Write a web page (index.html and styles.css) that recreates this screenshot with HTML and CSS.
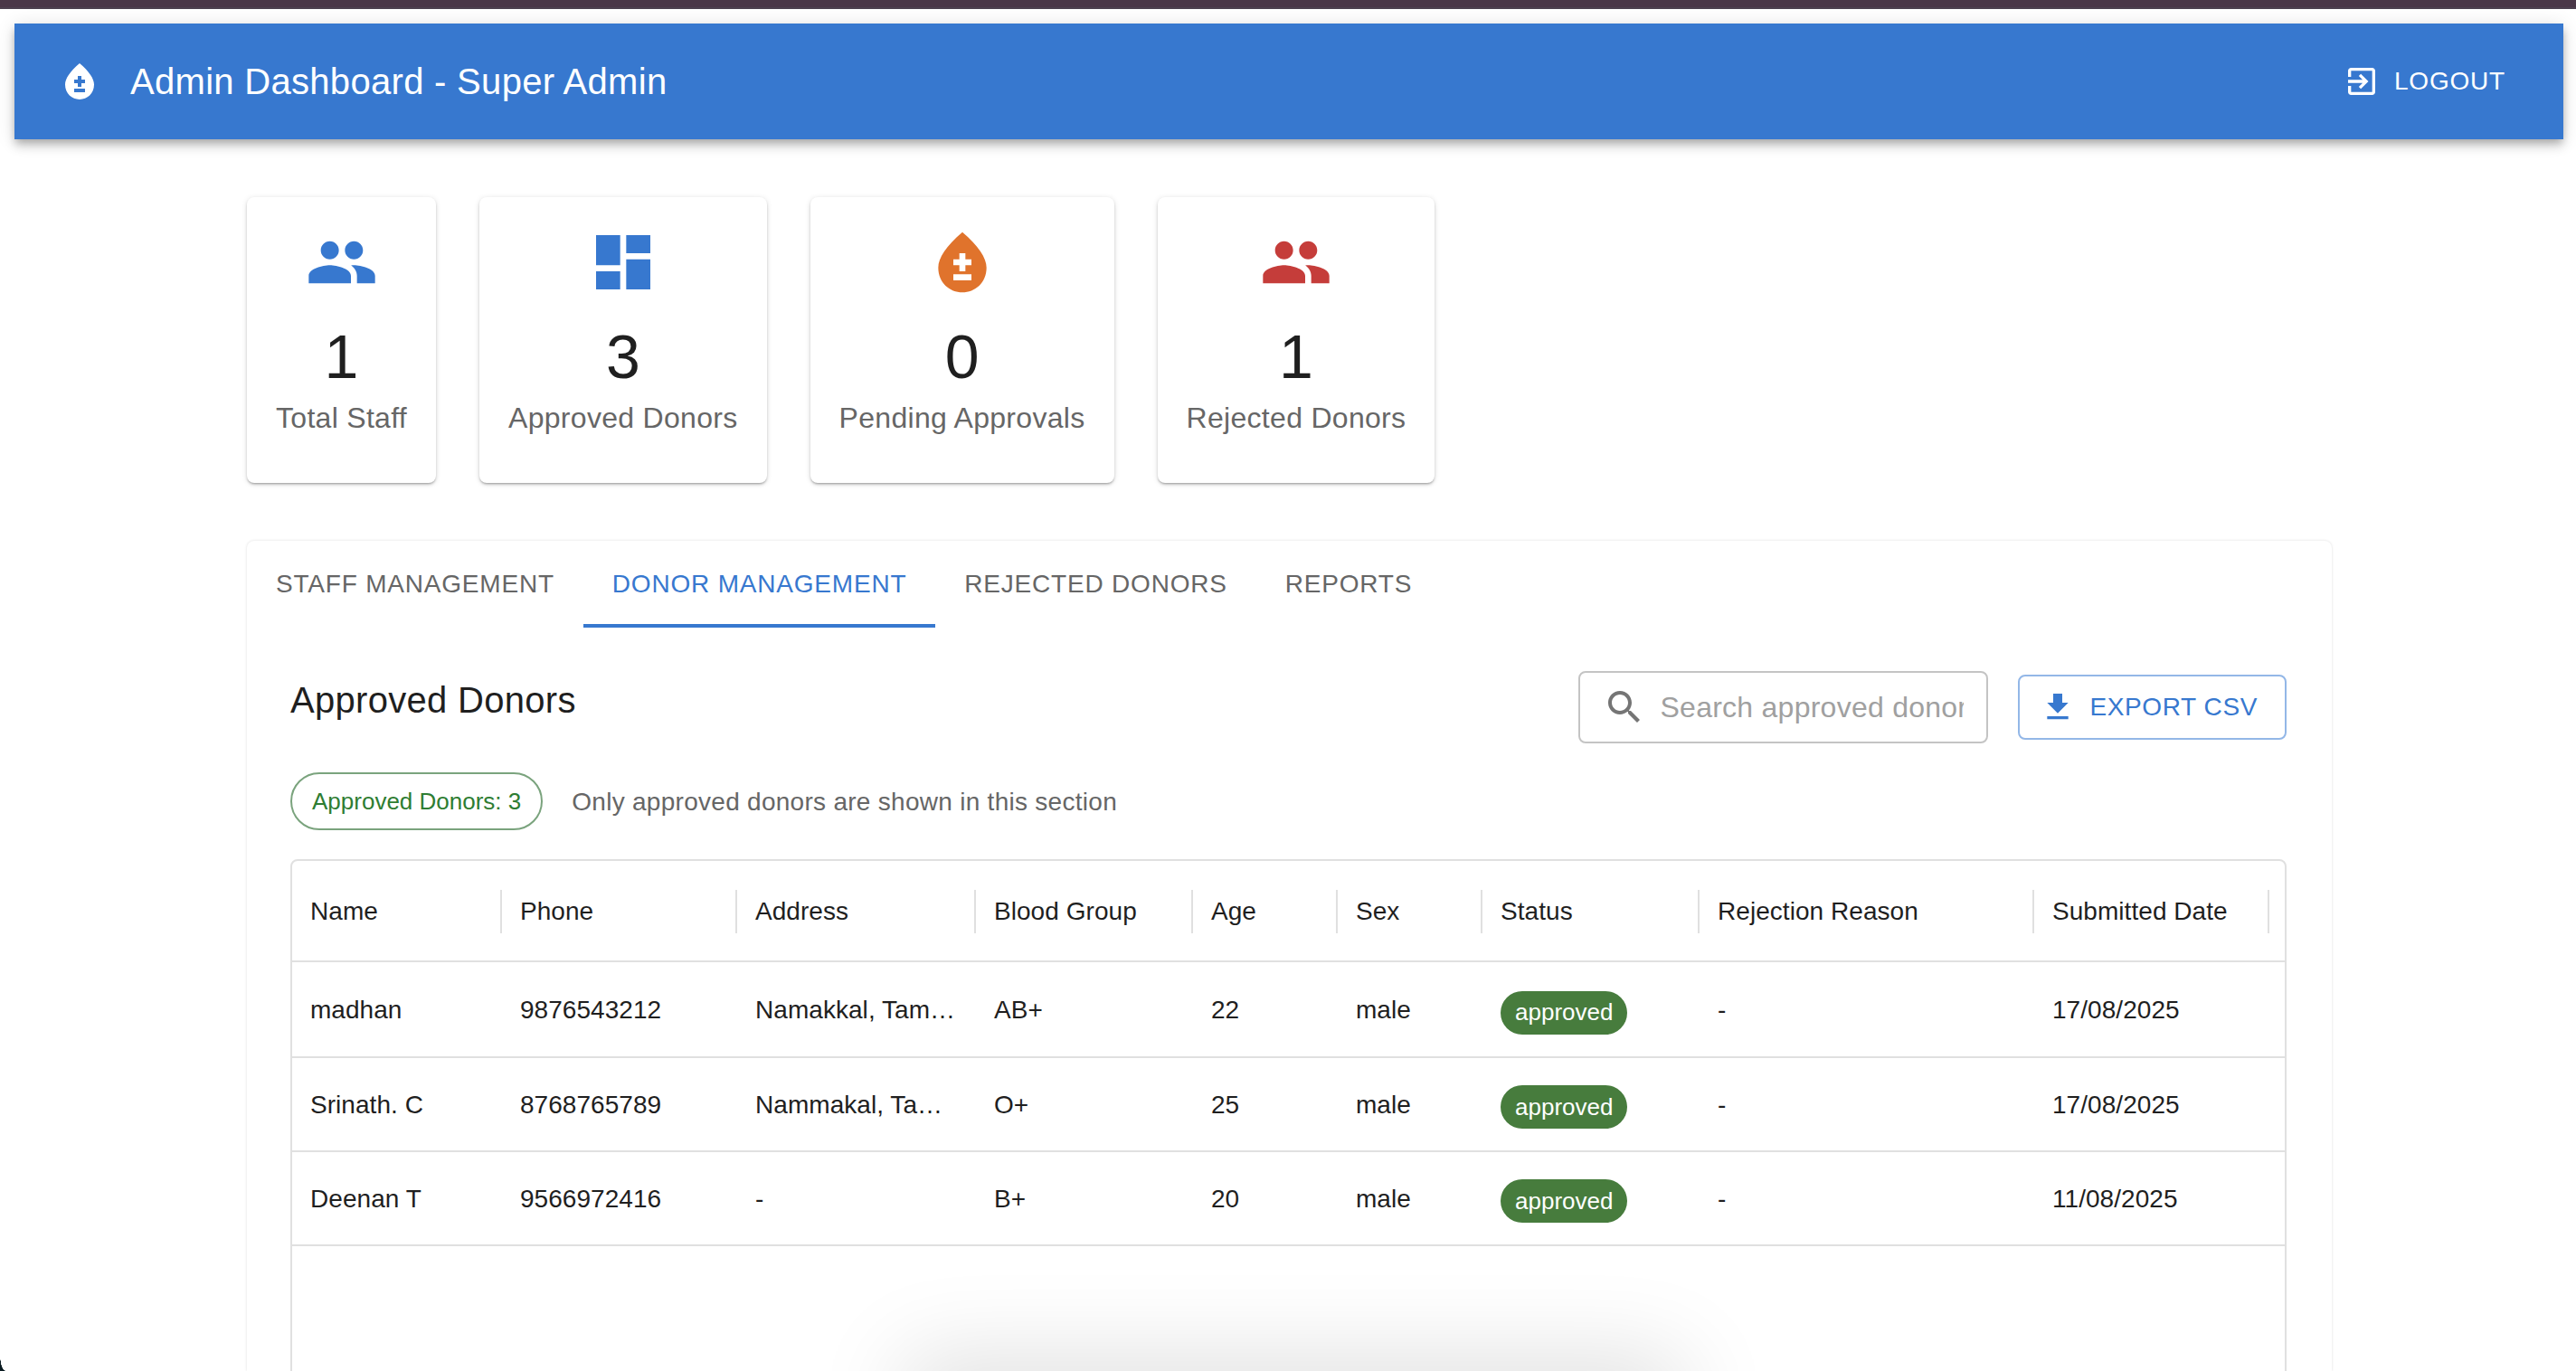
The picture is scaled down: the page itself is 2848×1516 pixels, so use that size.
FILE: index.html
```html
<!DOCTYPE html>
<html lang="en">
<head>
    <meta charset="UTF-8">
    <title>Admin Dashboard - Super Admin</title>
    <link rel="stylesheet" href="styles.css">
</head>
<body>
    <div class="topbar"></div>

    <header class="appbar">
        <svg class="appbar-icon" viewBox="0 0 24 24"><path d="M12 2c-5.33 4.55-8 8.48-8 11.8c0 4.98 3.8 8.2 8 8.2s8-3.22 8-8.2C20 10.48 17.33 6.55 12 2zM15 18H9v-2h6V18zM15 13h-2v2h-2v-2H9v-2h2V9h2v2h2V13z"/></svg>
        <h1 class="appbar-title">Admin Dashboard - Super Admin</h1>
        <button class="logout-btn">
            <svg class="logout-icon" viewBox="0 0 24 24"><path d="M10.09 15.59 11.5 17l5-5-5-5-1.41 1.41L12.67 11H3v2h9.67l-2.58 2.59zM19 3H5c-1.11 0-2 .9-2 2v4h2V5h14v14H5v-4H3v4c0 1.1.89 2 2 2h14c1.1 0 2-.9 2-2V5c0-1.1-.9-2-2-2z"/></svg>
            LOGOUT
        </button>
    </header>

    <main class="container">
        <section class="stats">
            <div class="stat-card">
                <svg class="stat-icon blue" viewBox="0 0 24 24"><path d="M16 11c1.66 0 2.99-1.34 2.99-3S17.66 5 16 5c-1.66 0-3 1.34-3 3s1.34 3 3 3zm-8 0c1.66 0 2.99-1.34 2.99-3S9.66 5 8 5C6.34 5 5 6.34 5 8s1.34 3 3 3zm0 2c-2.33 0-7 1.17-7 3.5V19h14v-2.5c0-2.33-4.67-3.5-7-3.5zm8 0c-.29 0-.62.02-.97.05 1.16.84 1.97 1.97 1.97 3.45V19h6v-2.5c0-2.33-4.67-3.5-7-3.5z"/></svg>
                <div class="stat-num">1</div>
                <div class="stat-label">Total Staff</div>
            </div>
            <div class="stat-card">
                <svg class="stat-icon blue" viewBox="0 0 24 24"><path d="M3 13h8V3H3v10zm0 8h8v-6H3v6zm10 0h8V11h-8v10zm0-18v6h8V3h-8z"/></svg>
                <div class="stat-num">3</div>
                <div class="stat-label">Approved Donors</div>
            </div>
            <div class="stat-card">
                <svg class="stat-icon orange" viewBox="0 0 24 24"><path d="M12 2c-5.33 4.55-8 8.48-8 11.8c0 4.98 3.8 8.2 8 8.2s8-3.22 8-8.2C20 10.48 17.33 6.55 12 2zM15 18H9v-2h6V18zM15 13h-2v2h-2v-2H9v-2h2V9h2v2h2V13z"/></svg>
                <div class="stat-num">0</div>
                <div class="stat-label">Pending Approvals</div>
            </div>
            <div class="stat-card">
                <svg class="stat-icon red" viewBox="0 0 24 24"><path d="M16 11c1.66 0 2.99-1.34 2.99-3S17.66 5 16 5c-1.66 0-3 1.34-3 3s1.34 3 3 3zm-8 0c1.66 0 2.99-1.34 2.99-3S9.66 5 8 5C6.34 5 5 6.34 5 8s1.34 3 3 3zm0 2c-2.33 0-7 1.17-7 3.5V19h14v-2.5c0-2.33-4.67-3.5-7-3.5zm8 0c-.29 0-.62.02-.97.05 1.16.84 1.97 1.97 1.97 3.45V19h6v-2.5c0-2.33-4.67-3.5-7-3.5z"/></svg>
                <div class="stat-num">1</div>
                <div class="stat-label">Rejected Donors</div>
            </div>
        </section>

        <section class="panel">
            <nav class="tabs">
                <div class="tab">STAFF MANAGEMENT</div>
                <div class="tab active">DONOR MANAGEMENT</div>
                <div class="tab">REJECTED DONORS</div>
                <div class="tab">REPORTS</div>
            </nav>

            <div class="panel-body">
                <div class="toolbar">
                    <h2 class="section-title">Approved Donors</h2>
                    <div class="toolbar-actions">
                        <label class="search">
                            <svg class="search-icon" viewBox="0 0 24 24"><path d="M15.5 14h-.79l-.28-.27C15.41 12.59 16 11.11 16 9.5 16 5.91 13.09 3 9.5 3S3 5.91 3 9.5 5.91 16 9.5 16c1.61 0 3.09-.59 4.23-1.57l.27.28v.79l5 4.99L20.49 19l-4.99-5zm-6 0C7.01 14 5 11.99 5 9.5S7.01 5 9.5 5 14 7.01 14 9.5 11.99 14 9.5 14z"/></svg>
                            <input class="search-input" type="text" placeholder="Search approved donors...">
                        </label>
                        <button class="export-btn">
                            <svg class="export-icon" viewBox="0 0 24 24"><path d="M19 9h-4V3H9v6H5l7 7 7-7zM5 18v2h14v-2H5z"/></svg>
                            EXPORT CSV
                        </button>
                    </div>
                </div>

                <div class="summary">
                    <span class="count-chip">Approved Donors: 3</span>
                    <span class="summary-note">Only approved donors are shown in this section</span>
                </div>

                <div class="grid">
                    <div class="row head">
                        <div class="cell">Name</div>
                        <div class="cell">Phone</div>
                        <div class="cell">Address</div>
                        <div class="cell">Blood Group</div>
                        <div class="cell">Age</div>
                        <div class="cell">Sex</div>
                        <div class="cell">Status</div>
                        <div class="cell">Rejection Reason</div>
                        <div class="cell">Submitted Date</div>
                    </div>
                    <div class="row first">
                        <div class="cell">madhan</div>
                        <div class="cell">9876543212</div>
                        <div class="cell">Namakkal, Tam…</div>
                        <div class="cell">AB+</div>
                        <div class="cell">22</div>
                        <div class="cell">male</div>
                        <div class="cell"><span class="status">approved</span></div>
                        <div class="cell">-</div>
                        <div class="cell">17/08/2025</div>
                    </div>
                    <div class="row">
                        <div class="cell">Srinath. C</div>
                        <div class="cell">8768765789</div>
                        <div class="cell">Nammakal, Ta…</div>
                        <div class="cell">O+</div>
                        <div class="cell">25</div>
                        <div class="cell">male</div>
                        <div class="cell"><span class="status">approved</span></div>
                        <div class="cell">-</div>
                        <div class="cell">17/08/2025</div>
                    </div>
                    <div class="row">
                        <div class="cell">Deenan T</div>
                        <div class="cell">9566972416</div>
                        <div class="cell">-</div>
                        <div class="cell">B+</div>
                        <div class="cell">20</div>
                        <div class="cell">male</div>
                        <div class="cell"><span class="status">approved</span></div>
                        <div class="cell">-</div>
                        <div class="cell">11/08/2025</div>
                    </div>
                </div>
            </div>
        </section>
    </main>

    <div class="dock-shadow"></div>
    <div class="window-corner"></div>
</body>
</html>
```

FILE: styles.css
```css
* {
    box-sizing: border-box;
}

html, body {
    height: 1516px;
    margin: 0;
    overflow: hidden;
}

body {
    position: relative;
    background: #fff;
    font-family: "Liberation Sans", Arial, sans-serif;
    color: #1f1f1f;
}

button {
    font-family: inherit;
    background: none;
    cursor: pointer;
}

svg {
    display: block;
    fill: currentColor;
    flex-shrink: 0;
}

.topbar {
    height: 10px;
    background: #4a3748;
    border-bottom: 2px solid #4d4150;
}

.appbar {
    display: flex;
    align-items: center;
    height: 128px;
    margin: 16px 14px 0 16px;
    padding: 0 48px;
    background: #3778cf;
    color: #fff;
    box-shadow: 0 4px 8px -2px rgba(0,0,0,.2), 0 8px 10px 0 rgba(0,0,0,.14), 0 2px 20px 0 rgba(0,0,0,.12);
}

.appbar-icon {
    width: 48px;
    height: 48px;
    margin-right: 32px;
}

.appbar-title {
    flex: 1;
    margin: 0;
    font-size: 40px;
    font-weight: 400;
    letter-spacing: .3px;
}

.logout-btn {
    display: flex;
    align-items: center;
    padding: 12px 16px;
    border: 0;
    color: #fff;
    font-size: 28px;
    letter-spacing: .8px;
}

.logout-icon {
    width: 40px;
    height: 40px;
    margin: 0 16px 0 -8px;
}

.container {
    width: 2305px;
    margin: 64px 0 0 273px;
}

.stats {
    display: flex;
    gap: 48px;
}

.stat-card {
    display: flex;
    flex-direction: column;
    align-items: center;
    padding: 32px 32px 48px;
    height: 316px;
    background: #fff;
    border-radius: 8px;
    box-shadow: 0 2px 2px -1px rgba(0,0,0,.2), 0 2px 3px 0 rgba(0,0,0,.14), 0 1px 6px 0 rgba(0,0,0,.12);
}

.stat-icon {
    width: 80px;
    height: 80px;
}

.blue { color: #3778cf; }
.orange { color: #e0732c; }
.red { color: #c53d3a; }

.stat-num {
    margin-top: 22px;
    font-size: 68px;
    line-height: 84px;
}

.stat-label {
    margin-top: 2px;
    font-size: 32px;
    line-height: 48px;
    letter-spacing: .3px;
    color: #666;
}

.panel {
    height: 918px;
    margin-top: 64px;
    overflow: hidden;
    background: #fff;
    border-radius: 8px 8px 0 0;
    box-shadow: 0 0 3px rgba(0,0,0,.14);
}

.tabs {
    display: flex;
    height: 96px;
}

.tab {
    display: flex;
    align-items: center;
    padding: 0 32px;
    font-size: 28px;
    letter-spacing: .8px;
    color: #666;
}

.tab.active {
    color: #3778cf;
    box-shadow: inset 0 -4px 0 #3778cf;
}

.panel-body {
    padding: 48px 50px 0 48px;
}

.toolbar {
    display: flex;
    justify-content: space-between;
    align-items: center;
    height: 80px;
}

.section-title {
    margin: 0 0 16px;
    font-size: 40px;
    font-weight: 400;
    letter-spacing: .3px;
}

.toolbar-actions {
    display: flex;
    align-items: center;
    gap: 33px;
}

.search {
    display: flex;
    align-items: center;
    width: 453px;
    height: 80px;
    padding: 0 25px;
    border: 2px solid #c4c4c4;
    border-radius: 8px;
}

.search-icon {
    width: 48px;
    height: 48px;
    color: #757575;
    margin-right: 16px;
}

.search-input {
    flex: 1;
    min-width: 0;
    border: 0;
    padding: 0;
    outline: 0;
    font-family: inherit;
    font-size: 32px;
    letter-spacing: .25px;
    color: #1f1f1f;
}

.search-input::placeholder {
    color: #a0a0a0;
    opacity: 1;
}

.export-btn {
    display: flex;
    align-items: center;
    height: 72px;
    padding: 0 30px;
    border: 2px solid #93b7e7;
    border-radius: 8px;
    color: #3778cf;
    font-size: 28px;
    letter-spacing: .6px;
}

.export-icon {
    width: 40px;
    height: 40px;
    margin: 0 16px 0 -8px;
}

.summary {
    display: flex;
    align-items: center;
    gap: 32px;
    margin-top: 32px;
}

.count-chip {
    display: flex;
    align-items: center;
    height: 64px;
    padding: 0 22px;
    border: 2px solid #7aa37d;
    border-radius: 32px;
    font-size: 26px;
    color: #2e7d32;
}

.summary-note {
    margin-top: 1px;
    font-size: 28px;
    letter-spacing: .28px;
    color: #666;
}

.grid {
    margin-top: 32px;
    height: 700px;
    border: 2px solid #e0e0e0;
    border-radius: 8px;
}

.row {
    display: grid;
    grid-template-columns: 232px 260px 264px 240px 160px 160px 240px 370px 260px;
    align-items: center;
    height: 104px;
    padding-top: 1px;
    border-bottom: 2px solid #e0e0e0;
    font-size: 28px;
    letter-spacing: .05px;
}

.row.head {
    height: 112px;
}

.row.first {
    height: 106px;
    padding-top: 2px;
}

.cell {
    position: relative;
    padding: 0 20px;
    min-width: 0;
    white-space: nowrap;
}

.head .cell::after {
    content: "";
    position: absolute;
    top: -8px;
    right: 0;
    bottom: -8px;
    width: 2px;
    background: #e0e0e0;
}

.status {
    display: inline-flex;
    align-items: center;
    height: 48px;
    margin-top: 5px;
    padding: 0 16px;
    border-radius: 24px;
    background: #477c3d;
    color: #fff;
    font-size: 26px;
    letter-spacing: 0;
    vertical-align: middle;
}

.dock-shadow {
    position: absolute;
    left: 800px;
    bottom: 0;
    width: 1260px;
    height: 110px;
    overflow: hidden;
}

.dock-shadow::before {
    content: "";
    position: absolute;
    left: 200px;
    top: 100%;
    width: 860px;
    height: 100px;
    box-shadow: 0 -15px 100px rgba(0,0,0,.13);
}

.window-corner {
    position: absolute;
    left: 0;
    bottom: 0;
    width: 6px;
    height: 18px;
    background: radial-gradient(ellipse 6px 18px at 100% 0, transparent 96%, #0b1c22 100%);
}
```
